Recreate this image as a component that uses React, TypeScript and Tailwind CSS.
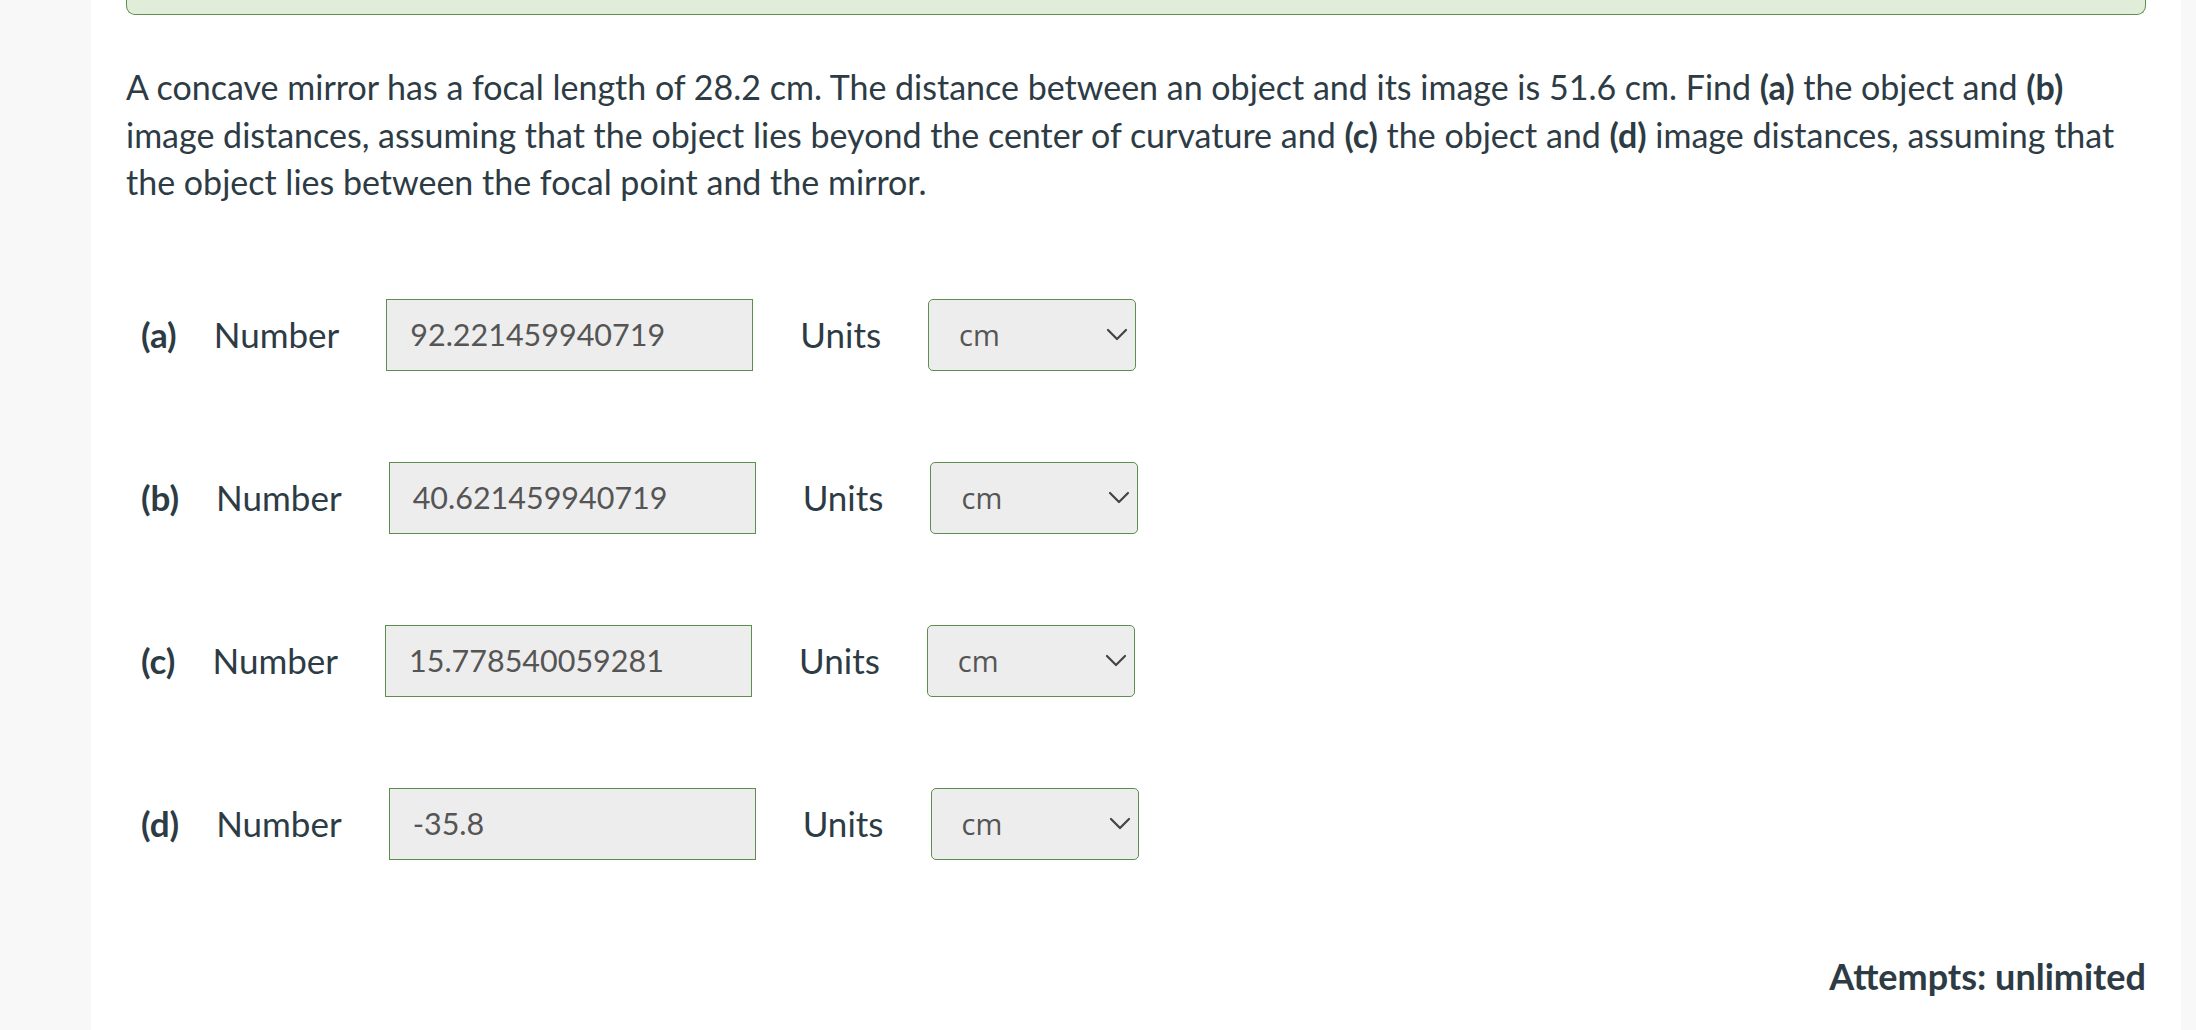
import React from "react";

const rows = [
  { label: "(a)", value: "92.221459940719" },
  { label: "(b)", value: "40.621459940719" },
  { label: "(c)", value: "15.778540059281" },
  { label: "(d)", value: "-35.8" },
];

function Chevron() {
  return (
    <svg width="22" height="14" viewBox="0 0 22 14" fill="none">
      <path d="M2 2 L11 11 L20 2" stroke="#444" strokeWidth="2.2" strokeLinecap="round" strokeLinejoin="round" />
    </svg>
  );
}

export default function App() {
  return (
    <div
      className="min-h-[1030px] w-full bg-[#f8f8f8] flex"
      style={{ fontFamily: "Lato, 'Liberation Sans', sans-serif" }}
    >
      <div className="w-[91px] shrink-0" />
      <div className="flex-1 bg-white px-[35px] pb-[40px] text-[#2d3b45]">
        <div className="h-[15px] bg-[#e0eed9] border-x border-b border-[#5d8e50] rounded-b-[9px]" />
        <p className="mt-[48px] text-[34px] leading-[47.5px]">
          A concave mirror has a focal length of 28.2 cm. The distance between an object and its image is 51.6 cm. Find <b>(a)</b> the object and <b>(b)</b> image distances, assuming that the object lies beyond the center of curvature and <b>(c)</b> the object and <b>(d)</b> image distances, assuming that the object lies between the focal point and the mirror.
        </p>
        <div className="mt-[93px] flex flex-col gap-[91px] pl-[15px]">
          {rows.map((r) => (
            <div key={r.label} className="flex items-center h-[72px]">
              <span className="font-bold text-[35px] mr-[37px]">{r.label}</span>
              <span className="text-[35px] mr-[47px]">Number</span>
              <div className="w-[367px] h-[72px] bg-[#ededed] border border-[#5d8e50] flex items-center pl-[23px] text-[30.5px] text-[#555] mr-[47px]">
                {r.value}
              </div>
              <span className="text-[35px] mr-[47px]">Units</span>
              <div className="w-[208px] h-[72px] bg-[#ededed] border border-[#5d8e50] rounded-[5px] flex items-center justify-between pl-[30px] pr-[7px]">
                <span className="text-[29px] text-[#555]" style={{ fontFamily: "'Open Sans', 'Noto Sans', sans-serif" }}>cm</span>
                <Chevron />
              </div>
            </div>
          ))}
        </div>
        <div className="mt-[89px] flex justify-end">
          <span className="font-bold text-[36px]">Attempts: unlimited</span>
        </div>
      </div>
      <div className="w-[15px] shrink-0" />
    </div>
  );
}
